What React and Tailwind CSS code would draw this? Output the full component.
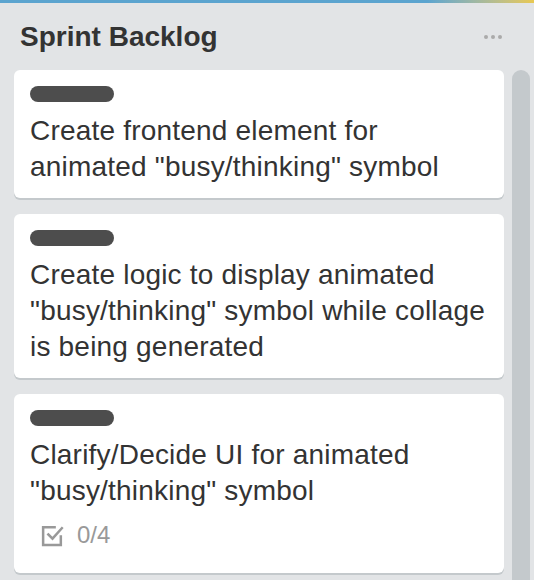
const cards = [
  { title: 'Create frontend element for animated "busy/thinking" symbol' },
  { title: 'Create logic to display animated "busy/thinking" symbol while collage is being generated' },
  { title: 'Clarify/Decide UI for animated "busy/thinking" symbol', checklist: '0/4' },
];

function CheckIcon() {
  return (
    <svg width="25" height="25" viewBox="0 0 24 24" fill="none" stroke="#999" strokeWidth="2.4" strokeLinecap="square">
      <path d="M20 13v8H3V4h11" />
      <path d="M8 11l4 4 9-10" />
    </svg>
  );
}

function Card({ title, checklist }) {
  return (
    <div className="bg-white rounded-[6px] shadow-[0_2px_0_#c4c9cc] px-4 pt-4 pb-[13px]">
      <div className="w-[84px] h-4 rounded-full bg-[#4d4d4d]" />
      <p className="mt-[11px] text-[28px] tracking-[0.2px] leading-[36px] text-[#333]">{title}</p>
      {checklist && (
        <div className="flex items-center gap-3 mt-[8px] mb-[7px] pl-[10px] text-[24px] text-[#999]">
          <CheckIcon />
          <span>{checklist}</span>
        </div>
      )}
    </div>
  );
}

export default function App() {
  return (
    <div className="w-[534px] h-[580px] overflow-hidden bg-[#e2e4e6]" style={{ fontFamily: '"Liberation Sans", Arial, sans-serif' }}>
      <div className="h-[3px] bg-gradient-to-r from-[#5ba4cf] via-[#5ba4cf] via-80% to-[#e8c850]" />
      <div className="flex items-center justify-between pl-5 pr-[32px] h-[67px]">
        <h2 className="text-[28px] font-bold text-[#333]">Sprint Backlog</h2>
        <div className="flex gap-[3px]">
          <span className="w-[4px] h-[4px] rounded-full bg-[#aaa]" />
          <span className="w-[4px] h-[4px] rounded-full bg-[#aaa]" />
          <span className="w-[4px] h-[4px] rounded-full bg-[#aaa]" />
        </div>
      </div>
      <div className="flex">
        <div className="ml-[14px] w-[490px] flex flex-col gap-[16px]">
          {cards.map((c, i) => <Card key={i} {...c} />)}
        </div>
        <div className="ml-2 w-[18px] rounded-t-full bg-[#c4c9cc] h-[520px]" />
      </div>
    </div>
  );
}
